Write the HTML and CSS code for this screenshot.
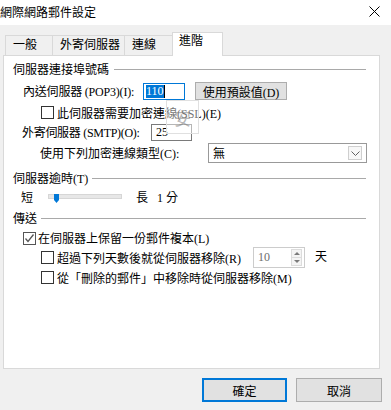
FILE: index.html
```html
<!DOCTYPE html>
<html lang="zh-Hant">
<head>
    <meta charset="UTF-8">
    <meta name="viewport" content="width=device-width, initial-scale=1.0">
    <title>網際網路郵件設定</title>
    <link rel="stylesheet" href="styles.css">
</head>
<body>
    <div class="titlebar">
        <span class="title">網際網路郵件設定</span>
        <svg class="close" width="11" height="11" viewBox="0 0 11 11">
            <path d="M0.5 0.5 L10.5 10.5 M10.5 0.5 L0.5 10.5" stroke="#000" stroke-width="1" fill="none"/>
        </svg>
    </div>

    <div class="tabs">
        <div class="tab t-general">一般</div>
        <div class="tab t-outgoing">外寄伺服器</div>
        <div class="tab t-conn">連線</div>
        <div class="tab active">進階</div>
    </div>

    <div class="panel">
        <div class="group g-ports">伺服器連接埠號碼</div>

        <div class="row r-pop">
            <span class="lbl lbl-pop">內送伺服器 (POP3)(I):</span>
            <div class="edit edit-pop focused"><span class="sel">110</span><span class="caret"></span></div>
            <button class="btn btn-default">使用預設值(D)</button>
        </div>

        <div class="row r-ssl">
            <span class="cb"></span>
            <span>此伺服器需要加密連線(SSL)(E)</span>
        </div>

        <div class="row r-smtp">
            <span class="lbl lbl-smtp">外寄伺服器 (SMTP)(O):</span>
            <div class="edit edit-smtp">25</div>
        </div>

        <div class="row r-enc">
            <span class="lbl lbl-enc">使用下列加密連線類型(C):</span>
            <div class="combo">
                <span class="combo-text">無</span>
                <span class="combo-btn">
                    <svg width="9" height="5" viewBox="0 0 9 5"><path d="M0.5 0.5 L4.5 4.5 L8.5 0.5" stroke="#606060" fill="none"/></svg>
                </span>
            </div>
        </div>

        <div class="group g-timeout">伺服器逾時(T)</div>

        <div class="row r-slider">
            <span>短</span>
            <div class="track">
                <svg class="thumb" width="5" height="9" viewBox="0 0 5 9"><path d="M0 0 H5 V6 L2.5 9 L0 6 Z" fill="#0078d7"/></svg>
            </div>
            <span class="long">長</span>
            <span class="minutes">1 分</span>
        </div>

        <div class="group g-delivery">傳送</div>

        <div class="row r-keep">
            <span class="cb checked">
                <svg width="11" height="11" viewBox="0 0 11 11"><path d="M1.5 5.5 L4 8.5 L9.5 1.5" stroke="#555" stroke-width="1.3" fill="none"/></svg>
            </span>
            <span>在伺服器上保留一份郵件複本(L)</span>
        </div>

        <div class="row r-remove">
            <span class="cb"></span>
            <span class="lbl lbl-remove">超過下列天數後就從伺服器移除(R)</span>
            <div class="spin">
                <span class="spin-text">10</span>
                <span class="spin-btns">
                    <span class="spin-up"></span>
                    <span class="spin-down"></span>
                </span>
            </div>
            <span class="days">天</span>
        </div>

        <div class="row r-deleted">
            <span class="cb"></span>
            <span>從「刪除的郵件」中移除時從伺服器移除(M)</span>
        </div>
    </div>

    <div class="footer">
        <button class="dlg-btn primary">確定</button>
        <button class="dlg-btn">取消</button>
    </div>

    <div class="ime">安</div>
</body>
</html>
```

FILE: styles.css
```css
* {
    box-sizing: border-box;
}
body {
    margin: 0;
    width: 391px;
    height: 410px;
    overflow: hidden;
    position: relative;
    background: #f0f0f0;
    color: #000;
    font-family: "Liberation Serif", "Noto Sans CJK TC", serif;
    font-size: 12px;
}
.titlebar {
    height: 25px;
    background: #fff;
    display: flex;
    align-items: center;
    justify-content: space-between;
    padding-right: 11px;
    font-family: "Noto Sans CJK TC", sans-serif;
}
.title {
    line-height: 14px;
    margin-top: -1px;
}
.close {
    display: block;
    margin-top: -2px;
}

/* tabs */
.tabs {
    height: 30px;
    display: flex;
    align-items: flex-end;
    padding-left: 5px;
}
.tab {
    height: 20px;
    border: 1px solid #d9d9d9;
    border-bottom: none;
    background: #f0f0f0;
    padding-left: 7px;
    line-height: 18px;
    margin-left: -1px;
    white-space: nowrap;
}
.t-general {
    width: 48px;
    margin-left: 0;
}
.t-outgoing {
    width: 73px;
}
.t-conn {
    width: 49px;
}
.tab.active {
    width: 51px;
    height: 24px;
    margin-bottom: -1px;
    background: #fff;
    line-height: 16px;
    padding-left: 6px;
    position: relative;
    z-index: 1;
}

/* panel */
.panel {
    margin-left: 3px;
    width: 377px;
    height: 314px;
    background: #fff;
    border: 1px solid #d9d9d9;
    padding: 6px 13px 0 9px;
}
.group {
    display: flex;
    align-items: center;
    height: 14px;
    white-space: nowrap;
}
.group::after {
    content: "";
    flex: 1;
    border-top: 1px solid #a9a9a9;
    margin-left: 4px;
}
.g-ports::after {
    margin-left: 5px;
}
.g-timeout {
    margin-top: 8px;
}
.g-delivery {
    margin-top: 7px;
}
.row {
    display: flex;
    align-items: center;
    white-space: nowrap;
}
.lbl {
    flex-shrink: 0;
}

.r-pop {
    height: 20px;
    margin-top: 5px;
    padding-left: 10px;
}
.lbl-pop {
    width: 120px;
    letter-spacing: -0.2px;
}
.edit {
    height: 17px;
    border: 1px solid #7a7a7a;
    background: #fff;
    display: flex;
    align-items: center;
    padding-left: 4px;
    flex-shrink: 0;
}
.edit-pop {
    width: 42px;
    padding-left: 2px;
}
.edit.focused {
    border-color: #0078d7;
}
.sel {
    background: #0078d7;
    color: #fff;
    line-height: 13px;
}
.caret {
    width: 1px;
    height: 13px;
    background: #000;
}
.btn {
    margin-left: 10px;
    width: 92px;
    height: 18px;
    padding: 0;
    background: #e1e1e1;
    border: 1px solid #adadad;
    font: inherit;
    color: #000;
}

.r-ssl {
    height: 15px;
    margin-top: 4px;
    padding-left: 28px;
}
.cb {
    width: 13px;
    height: 13px;
    border: 1px solid #333;
    background: #fff;
    margin-right: 3px;
    flex-shrink: 0;
    display: flex;
    align-items: center;
    justify-content: center;
}
.cb.checked {
    border-color: #555;
    margin-right: 2px;
}

.r-smtp {
    height: 20px;
    margin-top: 2px;
    padding-left: 9px;
}
.lbl-smtp {
    width: 129px;
    letter-spacing: -0.3px;
}
.edit-smtp {
    width: 41px;
}

.r-enc {
    height: 20px;
    margin-top: 1px;
    padding-left: 27px;
}
.lbl-enc {
    width: 168px;
}
.combo {
    width: 159px;
    height: 20px;
    flex-shrink: 0;
    border: 1px solid #999;
    background: #fff;
    display: flex;
    align-items: center;
    justify-content: space-between;
    padding: 0 4px 0 4px;
}
.combo-btn {
    width: 14px;
    height: 14px;
    border: 1px solid #cfcfcf;
    background: #f7f7f7;
    display: flex;
    align-items: center;
    justify-content: center;
}

.r-slider {
    height: 14px;
    margin-top: 5px;
    padding-left: 8px;
}
.track {
    position: relative;
    margin-left: 15px;
    width: 74px;
    height: 5px;
    background: #e7e7e7;
    border: 1px solid #d6d6d6;
    margin-top: -1px;
}
.thumb {
    position: absolute;
    left: 5px;
    top: -1px;
}
.long {
    margin-left: 14px;
}
.minutes {
    margin-left: 9px;
}

.r-keep {
    height: 14px;
    margin-top: 6px;
    padding-left: 10px;
}
.r-remove {
    height: 21px;
    margin-top: 2px;
    padding-left: 28px;
}
.lbl-remove {
    width: 196px;
}
.spin {
    width: 52px;
    height: 21px;
    border: 1px solid #cccccc;
    background: #fff;
    display: flex;
    align-items: center;
    justify-content: space-between;
    padding: 0 2px 0 4px;
    color: #6d6d6d;
    flex-shrink: 0;
}
.spin-btns {
    width: 11px;
    height: 17px;
    display: flex;
    flex-direction: column;
    border: 1px solid #dcdcdc;
    background: #f4f4f4;
}
.spin-up,
.spin-down {
    flex: 1;
    display: flex;
    align-items: center;
    justify-content: center;
}
.spin-up::before {
    content: "";
    border-left: 3px solid transparent;
    border-right: 3px solid transparent;
    border-bottom: 3px solid #7a7a7a;
}
.spin-down {
    border-top: 1px solid #dcdcdc;
}
.spin-down::before {
    content: "";
    border-left: 3px solid transparent;
    border-right: 3px solid transparent;
    border-top: 3px solid #7a7a7a;
}
.days {
    margin-left: 10px;
    margin-top: -4px;
}
.r-deleted {
    height: 15px;
    margin-top: 2px;
    padding-left: 28px;
}

/* footer */
.footer {
    display: flex;
    justify-content: flex-end;
    gap: 9px;
    padding: 9px 9px 0 0;
}
.dlg-btn {
    width: 86px;
    height: 24px;
    padding: 0;
    background: #e1e1e1;
    border: 1px solid #adadad;
    font-family: "Noto Sans CJK TC", sans-serif;
    font-size: 12px;
    color: #000;
}
.dlg-btn.primary {
    width: 85px;
    border: 2px solid #0078d7;
}

/* stray IME candidate box lying over the dialog */
.ime {
    position: absolute;
    left: 166px;
    top: 100px;
    width: 33px;
    height: 34px;
    border: 1px solid #e0e0e0;
    background: rgba(255, 255, 255, 0.45);
    color: rgba(120, 120, 120, 0.55);
    font-family: "Noto Sans CJK TC", sans-serif;
    font-size: 17px;
    display: flex;
    align-items: center;
    justify-content: center;
}
```
